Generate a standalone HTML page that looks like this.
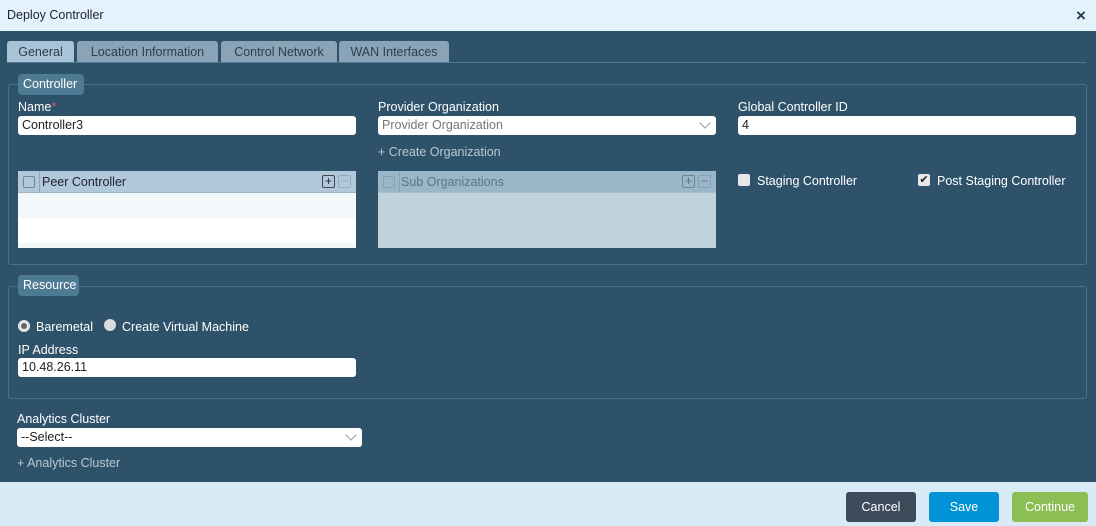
<!DOCTYPE html>
<html><head><style>
*{box-sizing:border-box;margin:0;padding:0}
body{width:1096px;height:526px;background:#2e526a;font-family:"Liberation Sans",sans-serif;font-size:12.5px;position:relative;overflow:hidden;color:#fff}
.a{position:absolute}
.hdr{left:0;top:0;width:1096px;height:31px;background:#e4f2fb;color:#223;font-size:12.5px;padding:8px 7px}
.tab{top:41px;height:21px;background:#8aa3b6;color:#2b3f50;border-radius:3px 3px 0 0;text-align:center;line-height:22px;font-size:12.5px}
.lbl{color:#fff;font-size:12.5px}
.inp{background:#fff;border-radius:3px;height:19px;color:#222;padding:2px 4px;font-size:12.5px;line-height:15px}
.fs{border:1px solid #4a7189;border-radius:3px}
.leg{background:#4f7a93;border-radius:4px;color:#fff;padding:3px 5px;font-size:12.5px}
.btn{top:492px;height:30px;border-radius:3px;color:#fff;text-align:center;line-height:30px;font-size:12.5px}
.chev{position:absolute;right:7px;top:3px;width:8px;height:8px;border-right:1px solid #999;border-bottom:1px solid #999;transform:rotate(45deg)}
.cb{width:12px;height:12px;border:1px solid #6d8799;border-radius:2px}
</style></head><body>
<div class="a hdr">Deploy Controller</div>
<div class="a" style="left:1076px;top:6px;color:#1d3b55;font-size:17px;font-weight:bold">×</div>

<div class="a tab" style="left:7px;width:67px;background:#a9c3d6">General</div>
<div class="a tab" style="left:77px;width:141px">Location Information</div>
<div class="a tab" style="left:221px;width:116px">Control Network</div>
<div class="a tab" style="left:339px;width:110px">WAN Interfaces</div>
<div class="a" style="left:7px;top:62px;width:1079px;height:1px;background:#4f7891"></div>

<div class="a fs" style="left:8px;top:84px;width:1079px;height:181px"></div>
<div class="a leg" style="left:18px;top:74px;width:66px;height:21px">Controller</div>
<div class="a lbl" style="left:18px;top:100px">Name<span style="color:#e05a6a">*</span></div>
<div class="a inp" style="left:18px;top:116px;width:338px">Controller3</div>
<div class="a lbl" style="left:378px;top:100px">Provider Organization</div>
<div class="a inp" style="left:378px;top:116px;width:338px;color:#777">Provider Organization<div class="chev"></div></div>
<div class="a" style="left:378px;top:145px;color:#b8c9d4">+ Create Organization</div>
<div class="a lbl" style="left:738px;top:100px">Global Controller ID</div>
<div class="a inp" style="left:738px;top:116px;width:338px">4</div>

<div class="a" style="left:18px;top:171px;width:338px;height:77px;background:#f2f7fa">
 <div style="height:22px;background:#b0c8d9;border-bottom:1px solid #9fb3c2;color:#223;position:relative">
  <div class="a cb" style="left:5px;top:5px"></div>
  <div class="a" style="left:21px;top:0;width:1px;height:22px;background:#8ea8ba"></div>
  <div class="a" style="left:24px;top:4px">Peer Controller</div>
  <div class="a" style="left:304px;top:4px;width:13px;height:13px;border:1px solid #445;border-radius:2px;font-size:12px;line-height:10px;text-align:center">+</div>
  <div class="a" style="left:320px;top:4px;width:13px;height:13px;border:1px solid #9ab;border-radius:2px;color:#9ab;line-height:10px;text-align:center">−</div>
 </div>
 <div class="a" style="left:0;top:47px;width:338px;height:25px;background:#fff"></div>
</div>

<div class="a" style="left:378px;top:171px;width:338px;height:77px;background:#c1d4dd">
 <div style="height:22px;background:#9ab6c9;border-bottom:1px solid #a8bfcd;color:#5d7587;position:relative">
  <div class="a cb" style="left:5px;top:5px;border-color:#87a2b3"></div>
  <div class="a" style="left:21px;top:0;width:1px;height:22px;background:#87a2b3"></div>
  <div class="a" style="left:23px;top:4px">Sub Organizations</div>
  <div class="a" style="left:304px;top:4px;width:13px;height:13px;border:1px solid #6d8799;border-radius:2px;line-height:10px;text-align:center">+</div>
  <div class="a" style="left:320px;top:4px;width:13px;height:13px;border:1px solid #87a2b3;border-radius:2px;line-height:10px;text-align:center">−</div>
 </div>
</div>

<div class="a" style="left:738px;top:174px;width:12px;height:12px;background:#e8e8e8;border-radius:2px"></div>
<div class="a lbl" style="left:757px;top:174px">Staging Controller</div>
<div class="a" style="left:918px;top:174px;width:12px;height:12px;background:#e8e8e8;border-radius:2px;color:#222;font-size:11px;line-height:12px;text-align:center">✔</div>
<div class="a lbl" style="left:937px;top:174px">Post Staging Controller</div>

<div class="a fs" style="left:8px;top:286px;width:1079px;height:113px"></div>
<div class="a leg" style="left:18px;top:275px;width:61px;height:21px">Resource</div>
<div class="a" style="left:18px;top:320px;width:12px;height:12px;border-radius:50%;background:#e6e6e6;border:3px solid #e6e6e6"><div style="width:6px;height:6px;border-radius:50%;background:#666"></div></div>
<div class="a lbl" style="left:36px;top:320px">Baremetal</div>
<div class="a" style="left:104px;top:319px;width:12px;height:12px;border-radius:50%;background:#dcdcdc"></div>
<div class="a lbl" style="left:122px;top:320px">Create Virtual Machine</div>
<div class="a lbl" style="left:18px;top:343px">IP Address</div>
<div class="a inp" style="left:18px;top:358px;width:338px">10.48.26.11</div>

<div class="a lbl" style="left:17px;top:412px">Analytics Cluster</div>
<div class="a inp" style="left:17px;top:428px;width:345px">--Select--<div class="chev"></div></div>
<div class="a" style="left:17px;top:456px;color:#b8c9d4">+ Analytics Cluster</div>

<div class="a" style="left:0;top:482px;width:1096px;height:44px;background:#d8ebf6"></div>
<div class="a btn" style="left:846px;width:70px;background:#3d4b5b">Cancel</div>
<div class="a btn" style="left:929px;width:70px;background:#0094d6">Save</div>
<div class="a btn" style="left:1012px;width:76px;background:#8dbe55">Continue</div>
</body></html>
